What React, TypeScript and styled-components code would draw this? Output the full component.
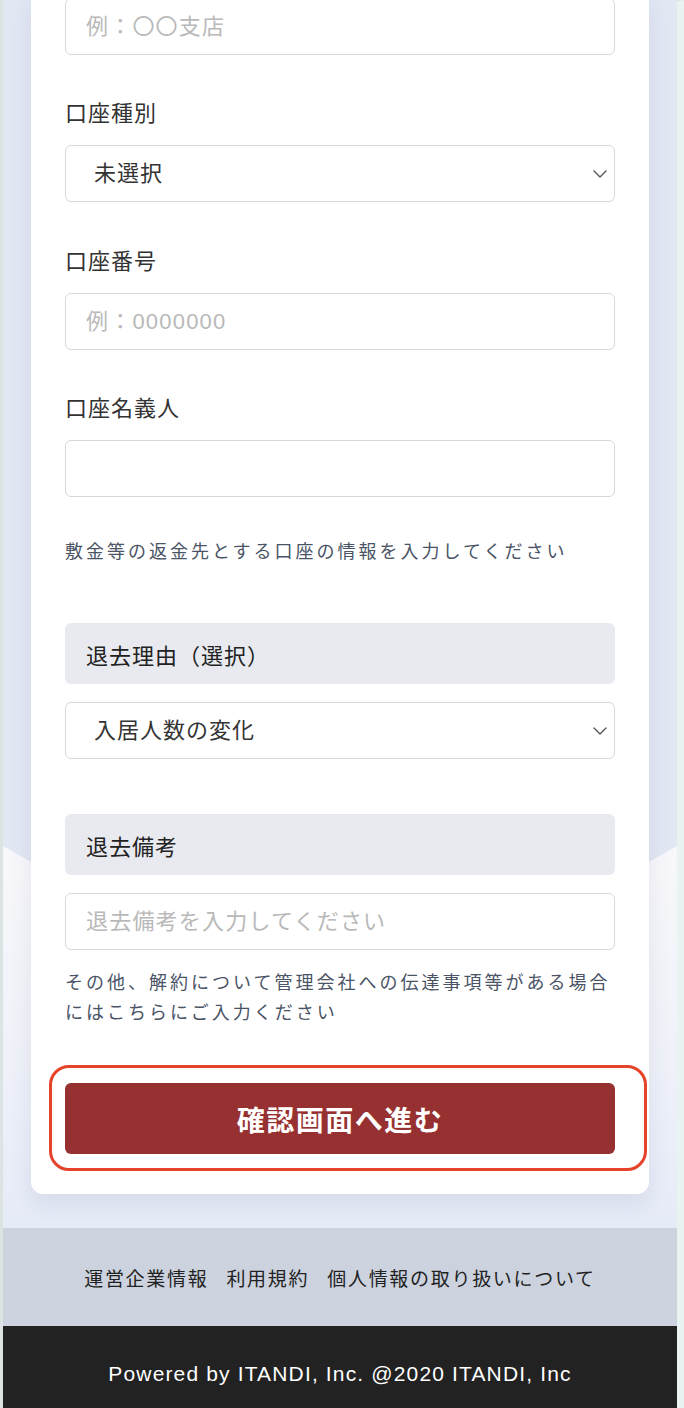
import styled, { createGlobalStyle } from 'styled-components';

const GlobalStyle = createGlobalStyle`
  html, body {
    margin: 0;
    padding: 0;
    overflow: hidden;
    background: #ffffff;
  }
  body {
    font-family: "Liberation Sans", "Noto Sans CJK JP", sans-serif;
    color: #333333;
  }
  * {
    box-sizing: border-box;
  }
`;

const Frame = styled.div`
  width: 684px;
  border-left: 3px solid #dbe4e2;
  border-right: 7px solid #e9f3f1;
  border-top: 1px solid #d6dfdd;
`;

const Main = styled.main`
  position: relative;
  background: #e2e7f4;
  padding: 0 28px 34px;
`;

const Wave = styled.div`
  position: absolute;
  left: 0;
  right: 0;
  bottom: 0;
  height: 382px;
  background: linear-gradient(180deg, #f8f8fb 0%, #f1f3f9 45%, #e6ebf8 100%);
  clip-path: polygon(0 0, 50% 192px, 100% 0, 100% 100%, 0 100%);
`;

const Card = styled.section`
  position: relative;
  margin-top: -3px;
  background: #ffffff;
  border-radius: 0 0 12px 12px;
  box-shadow: 0 10px 22px rgba(60, 72, 110, 0.1);
  padding: 0 34px 40px;
  display: flex;
  flex-direction: column;
`;

const Label = styled.div<{ $top: number }>`
  margin-top: ${(p) => p.$top}px;
  margin-bottom: 16px;
  font-size: 22px;
  line-height: 30px;
  letter-spacing: 1px;
  color: #333333;
`;

const Input = styled.input`
  display: block;
  width: 100%;
  height: 57px;
  border: 1.5px solid #d5d8de;
  border-radius: 6px;
  padding: 0 20px;
  font-family: inherit;
  font-size: 22px;
  letter-spacing: 1.2px;
  color: #333333;
  background: #ffffff;
  outline: none;

  &::placeholder {
    color: #b9b9b9;
  }
`;

const SelectWrap = styled.div`
  position: relative;
`;

const Select = styled.select`
  display: block;
  width: 100%;
  height: 57px;
  border: 1.5px solid #d5d8de;
  border-radius: 6px;
  padding: 0 40px 0 28px;
  font-family: inherit;
  font-size: 22px;
  letter-spacing: 1px;
  color: #333333;
  background: #ffffff;
  appearance: none;
  outline: none;
`;

const Chevron = styled.svg`
  position: absolute;
  right: 8px;
  top: 25px;
  pointer-events: none;
`;

const Help = styled.p<{ $top: number }>`
  margin: ${(p) => p.$top}px 0 0;
  font-size: 18px;
  line-height: 30px;
  letter-spacing: 3px;
  color: #4a5466;
`;

const SectionHead = styled.div<{ $top: number }>`
  margin-top: ${(p) => p.$top}px;
  margin-bottom: 18px;
  height: 61px;
  display: flex;
  align-items: center;
  padding: 0 21px;
  background: #e9eaf0;
  border-radius: 6px;
  font-size: 22px;
  letter-spacing: 1px;
  color: #222222;
`;

const ButtonWrap = styled.div`
  position: relative;
  margin-top: 55px;
`;

const Highlight = styled.div`
  position: absolute;
  left: -16px;
  right: -32px;
  top: -18px;
  bottom: -17px;
  border: 3px solid #e5432b;
  border-radius: 20px;
  pointer-events: none;
`;

const SubmitButton = styled.button`
  display: block;
  width: 100%;
  height: 71px;
  border: none;
  border-radius: 6px;
  background: #973131;
  color: #ffffff;
  font-family: inherit;
  font-size: 28px;
  font-weight: 700;
  letter-spacing: 1.5px;
  cursor: pointer;
`;

const LinksBar = styled.nav`
  height: 98px;
  background: #ccd2de;
  display: flex;
  align-items: center;
  justify-content: center;
  gap: 18px;
`;

const FooterLink = styled.a`
  font-size: 19px;
  letter-spacing: 1.7px;
  color: #222222;
  text-decoration: none;
`;

const Copyright = styled.footer`
  height: 82px;
  background: #222222;
  color: #ffffff;
  display: flex;
  justify-content: center;
  padding-top: 34px;
  font-size: 21px;
  line-height: 28px;
  letter-spacing: 1.15px;
`;

const SelectField = ({ value, options }: { value: string; options: string[] }) => (
  <SelectWrap>
    <Select defaultValue={value}>
      {options.map((o) => (
        <option key={o}>{o}</option>
      ))}
    </Select>
    <Chevron width="14" height="8" viewBox="0 0 14 8">
      <path d="M1 1l6 6 6-6" fill="none" stroke="#555" strokeWidth="1.4" strokeLinecap="round" strokeLinejoin="round" />
    </Chevron>
  </SelectWrap>
);

const App = () => {
  return (
    <>
      <GlobalStyle />
      <Frame>
        <Main>
          <Wave />
          <Card>
            <Input placeholder="例：〇〇支店" />

            <Label $top={44}>口座種別</Label>
            <SelectField value="未選択" options={['未選択', '普通', '当座']} />

            <Label $top={45}>口座番号</Label>
            <Input placeholder="例：0000000" />

            <Label $top={44}>口座名義人</Label>
            <Input />

            <Help $top={40}>敷金等の返金先とする口座の情報を入力してください</Help>

            <SectionHead $top={56}>退去理由（選択）</SectionHead>
            <SelectField value="入居人数の変化" options={['入居人数の変化', '転勤', 'その他']} />

            <SectionHead $top={55}>退去備考</SectionHead>
            <Input placeholder="退去備考を入力してください" />

            <Help $top={18}>
              その他、解約について管理会社への伝達事項等がある場合にはこちらにご入力ください
            </Help>

            <ButtonWrap>
              <SubmitButton type="button">確認画面へ進む</SubmitButton>
              <Highlight />
            </ButtonWrap>
          </Card>
        </Main>
        <LinksBar>
          <FooterLink href="#">運営企業情報</FooterLink>
          <FooterLink href="#">利用規約</FooterLink>
          <FooterLink href="#">個人情報の取り扱いについて</FooterLink>
        </LinksBar>
        <Copyright>Powered by ITANDI, Inc. @2020 ITANDI, Inc</Copyright>
      </Frame>
    </>
  );
};

export default App;
